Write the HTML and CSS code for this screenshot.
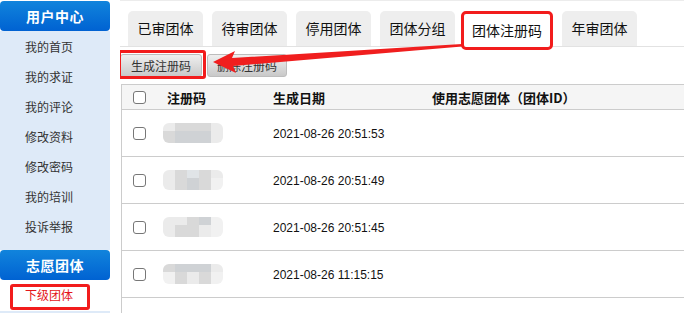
FILE: index.html
```html
<!DOCTYPE html>
<html lang="zh-CN">
<head>
<meta charset="utf-8">
<title>团体注册码</title>
<link rel="stylesheet" href="styles.css">
</head>
<body>
<div class="page">
  <aside class="sidebar">
    <div class="side-head">用户中心</div>
    <ul class="side-menu">
      <li>我的首页</li>
      <li>我的求证</li>
      <li>我的评论</li>
      <li>修改资料</li>
      <li>修改密码</li>
      <li>我的培训</li>
      <li>投诉举报</li>
    </ul>
    <div class="side-head">志愿团体</div>
    <ul class="side-sub">
      <li class="current">下级团体</li>
    </ul>
    <div class="side-foot"></div>
  </aside>
  <main class="main">
    <div class="tabs">
      <div class="tab">已审团体</div>
      <div class="tab">待审团体</div>
      <div class="tab">停用团体</div>
      <div class="tab">团体分组</div>
      <div class="tab active">团体注册码</div>
      <div class="tab">年审团体</div>
    </div>
    <div class="toolbar">
      <button class="btn btn-gen marked">生成注册码</button>
      <button class="btn btn-del">删除注册码</button>
    </div>
    <div class="table">
      <div class="row head">
        <div class="cell"><span class="check"></span></div>
        <div class="cell">注册码</div>
        <div class="cell">生成日期</div>
        <div class="cell">使用志愿团体（团体ID）</div>
      </div>
      <div class="row">
        <div class="cell"><span class="check"></span></div>
        <div class="cell"><div class="mosaic"><i class="a"></i><i class="b"></i><i class="b"></i><i class="b"></i><i class="a"></i><i class="b"></i><i class="c"></i><i class="c"></i><i class="c"></i><i class="a"></i></div></div>
        <div class="cell date">2021-08-26 20:51:53</div>
        <div class="cell"></div>
      </div>
      <div class="row">
        <div class="cell"><span class="check"></span></div>
        <div class="cell"><div class="mosaic"><i class="a"></i><i class="b"></i><i class="d"></i><i class="b"></i><i class="a"></i><i class="a"></i><i class="b"></i><i class="c"></i><i class="b"></i><i class="e"></i></div></div>
        <div class="cell date">2021-08-26 20:51:49</div>
        <div class="cell"></div>
      </div>
      <div class="row">
        <div class="cell"><span class="check"></span></div>
        <div class="cell"><div class="mosaic"><i class="a"></i><i class="a"></i><i class="b"></i><i class="c"></i><i class="e"></i><i class="a"></i><i class="b"></i><i class="b"></i><i class="a"></i><i class="e"></i></div></div>
        <div class="cell date">2021-08-26 20:51:45</div>
        <div class="cell"></div>
      </div>
      <div class="row">
        <div class="cell"><span class="check"></span></div>
        <div class="cell"><div class="mosaic"><i class="b"></i><i class="c"></i><i class="c"></i><i class="c"></i><i class="a"></i><i class="e"></i><i class="b"></i><i class="a"></i><i class="b"></i><i class="e"></i></div></div>
        <div class="cell date">2021-08-26 11:15:15</div>
        <div class="cell"></div>
      </div>
      <div class="row"></div>
    </div>
  </main>
</div>
<svg class="arrow" width="684" height="313" viewBox="0 0 684 313" aria-hidden="true">
  <polygon points="213,62 235,51 232,58 462,44 462,46.5 233,66 236,73" fill="#f01e1e"/>
</svg>
</body>
</html>
```

FILE: styles.css
```css
* { box-sizing: border-box; }

html, body {
  margin: 0;
  padding: 0;
  background: #ffffff;
  width: 684px;
  height: 313px;
  overflow: hidden;
}

body {
  font-family: "Noto Sans CJK SC", "Liberation Sans", sans-serif;
  color: #222;
  position: relative;
}

.page {
  display: flex;
  height: 313px;
  overflow: hidden;
}

/* ---------- sidebar ---------- */
.sidebar {
  width: 110px;
  flex: none;
  display: flex;
  flex-direction: column;
  padding-top: 1px;
}

.side-head {
  flex: none;
  height: 30px;
  line-height: 30px;
  text-align: center;
  color: #fff;
  font-size: 14px;
  font-weight: bold;
  border-radius: 4px;
  background: linear-gradient(#1184dc, #0062d2);
  letter-spacing: 0.5px;
}

.side-menu {
  flex: none;
  list-style: none;
  margin: 0;
  padding: 1px 0 8px;
  background: #deeaf8;
}

.side-menu li {
  height: 30px;
  line-height: 30px;
  padding-left: 25px;
  font-size: 12px;
  color: #333;
}

.side-sub {
  flex: none;
  list-style: none;
  margin: 0;
  padding: 4px 0 0 10px;
  background: #fff;
}

.side-sub li {
  width: 80px;
  height: 26px;
  padding-left: 12px;
  line-height: 16px;
  font-size: 12px;
  color: #e4161b;
  border: 3px solid #f21c1c;
  border-radius: 3px;
}

.side-foot {
  flex: 1;
  background: #deeaf8;
  margin-top: 1px;
}

/* ---------- main ---------- */
.main {
  flex: 1;
  min-width: 0;
  margin-left: 10px;
  border-top: 1px solid #ececec;
  display: flex;
  flex-direction: column;
  overflow: hidden;
}

.tabs {
  flex: none;
  display: flex;
  align-items: flex-start;
  gap: 9px;
  height: 46px;
  padding: 10px 0 0 8px;
  border-bottom: 1px solid #e2e2e2;
}

.tab {
  width: 75px;
  height: 35px;
  line-height: 35px;
  text-align: center;
  font-size: 14px;
  color: #111;
  background: #eeeeee;
  border-radius: 5px 5px 0 0;
  flex: none;
}

.tab.active {
  width: 92px;
  height: 39px;
  line-height: 33px;
  margin-left: -3px;
  background: #fff;
  border: 3px solid #f21c1c;
  border-radius: 5px;
  position: relative;
  z-index: 1;
}

.toolbar {
  flex: none;
  display: flex;
  gap: 5px;
  padding-top: 7px;
  height: 37px;
}

.btn {
  height: 23px;
  padding: 0;
  font-family: "Noto Sans CJK SC", sans-serif;
  font-size: 12px;
  line-height: 21px;
  color: #333;
  background: linear-gradient(#efefef, #c9c9c9);
  border: 1px solid #bdbdbd;
  border-radius: 3px;
}

.btn-gen { width: 82px; }
.btn-del { width: 80px; }

.marked { position: relative; }
.marked::after {
  content: "";
  position: absolute;
  top: -5px;
  left: -3px;
  right: -5px;
  bottom: -3px;
  border: 3px solid #f21c1c;
  border-radius: 3px;
}

/* ---------- table ---------- */
.table {
  flex: none;
  margin-left: 1px;
  border-left: 1px solid #cccccc;
  border-top: 1px solid #cccccc;
}

.row {
  display: grid;
  grid-template-columns: 45px 106px 159px 1fr;
  align-items: center;
  height: 47px;
  border-bottom: 1px solid #cccccc;
}

.row.head {
  height: 25px;
  background: #f5f5f5;
  font-size: 13px;
  font-weight: bold;
  color: #111;
}

.cell {
  display: flex;
  align-items: center;
}

.cell:first-child { padding-left: 11px; }

.check {
  display: block;
  width: 13px;
  height: 13px;
  border: 1px solid #777;
  border-radius: 3px;
  background: #fff;
}

.date {
  font-family: "Liberation Sans", "DejaVu Sans", sans-serif;
  font-size: 12px;
  color: #111;
  padding-top: 1px;
}

.mosaic {
  display: grid;
  grid-template-columns: repeat(5, 12px);
  grid-template-rows: 8px 12px;
  margin-left: -4px;
  border-radius: 6px;
  overflow: hidden;
}

.mosaic i { display: block; }
.mosaic .a { background: #ebebeb; }
.mosaic .b { background: #d9d9d9; }
.mosaic .c { background: #cfd2d5; }
.mosaic .d { background: #e0e4e7; }
.mosaic .e { background: #f1f1f1; }

/* ---------- annotation arrow ---------- */
.arrow {
  position: absolute;
  left: 0;
  top: 0;
  pointer-events: none;
  z-index: 5;
}
```
